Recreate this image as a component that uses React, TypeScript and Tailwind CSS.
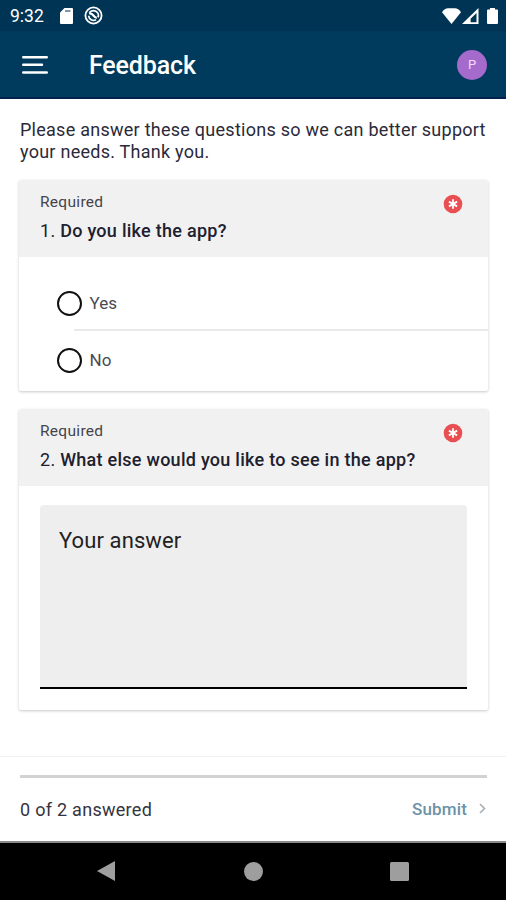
import type { ReactNode } from 'react';

function StatusBar() {
  return (
    <div className="flex h-[31px] items-center justify-between bg-[#003455] pl-[10px] pr-[8px] text-white">
      <div className="flex h-full items-center">
        <span className="w-[50px] pt-[1px] text-[17.5px] leading-[30px]">9:32</span>
        <svg className="h-4 w-[13px]" viewBox="0 0 13 16" fill="currentColor">
          <path d="M4.5 0H12a1 1 0 0 1 1 1v14a1 1 0 0 1-1 1H1a1 1 0 0 1-1-1V4.5z" />
          <path d="M5 3h5.5" stroke="#5d7f98" strokeWidth="1.6" />
        </svg>
        <svg className="ml-[11px] h-[19px] w-[19px]" viewBox="0 0 19 19" fill="none" stroke="currentColor">
          <circle cx="9.5" cy="9.5" r="8.1" strokeWidth="1.8" />
          <path d="M5.4 6.8a4.9 4.9 0 0 1 8.6 4.6M12 13.7a4.9 4.9 0 0 1-7.3-3.9" strokeWidth="1.8" />
          <path d="M5.2 7.8c2-.8 3 .2 4.200 1.700s2 2.300 3.400 2.300" strokeWidth="2.2" />
        </svg>
      </div>
      <div className="flex items-center">
        <svg className="h-4 w-[19px]" viewBox="0 0 19 16" fill="currentColor">
          <path d="M0 4.200C1.500 1.500 4 .2 6 .2h7c2 0 4.500 1.300 6 4L9.500 16z" />
        </svg>
        <svg className="ml-[1px] h-4 w-[17px]" viewBox="0 0 17 16" fill="currentColor">
          <path fillRule="evenodd" d="M0 16L16.500 0v16zM8.600 14.200h5.900V5L8.600 10.800z" />
        </svg>
        <svg className="ml-[8px] h-4 w-[11px]" viewBox="0 0 11 16" fill="currentColor">
          <path d="M3 0h5v1.400h2a1 1 0 0 1 1 1V15a1 1 0 0 1-1 1H1a1 1 0 0 1-1-1V2.400a1 1 0 0 1 1-1h2z" />
        </svg>
      </div>
    </div>
  );
}

function AppBar() {
  return (
    <header className="flex h-[68px] items-center border-b-2 border-[#00204f] bg-[#003a5d] pl-[22px] pr-[19px]">
      <button aria-label="Menu" className="pt-[2px]">
        <svg className="h-5 w-[26px]" viewBox="0 0 26 20" fill="none" stroke="white" strokeWidth="2.4" strokeLinecap="round">
          <path d="M1.200 2.200h23.600M1.200 9.800h18.800M1.200 17.500h23.600" />
        </svg>
      </button>
      <h1 className="ml-[41px] flex-1 pt-[4px] text-[25px] font-medium tracking-[-0.15px] text-white">Feedback</h1>
      <div className="mt-[2px] flex h-[30px] w-[30px] items-center justify-center rounded-full bg-[#a46bcc] text-[13px] text-[#f0dcfa]">P</div>
    </header>
  );
}

interface QuestionProps {
  num: number;
  title: string;
  className: string;
  children: ReactNode;
}

function QuestionCard({ num, title, className, children }: QuestionProps) {
  return (
    <section className={`ml-[19px] mr-[18px] rounded-[2px] bg-white shadow-[0_1px_3px_rgba(0,0,0,0.22)] ${className}`}>
      <div className="flex h-[77px] justify-between rounded-t-[2px] bg-[#f1f1f1] pl-[21px] pr-[25px] pt-[11px]">
        <div>
          <p className="text-[15.5px] leading-[22px] tracking-[0.3px] text-[#44444c]">Required</p>
          <h2 className="mt-[7px] text-[18px] leading-[22px] font-medium tracking-[0.27px] text-[#20202e]">
            <span className="font-normal">{num}.</span> {title}
          </h2>
        </div>
        <svg className="mt-[3px] h-5 w-5" viewBox="0 0 20 20">
          <circle cx="10" cy="10" r="9.3" fill="#e94f52" />
          <path d="M10 5.300v9.400M5.900 7.600l8.200 4.800M14.100 7.600l-8.200 4.800" stroke="white" strokeWidth="1.8" />
        </svg>
      </div>
      {children}
    </section>
  );
}

function Option({ label }: { label: string }) {
  return (
    <label className="flex h-[26px] items-center gap-[8px] pl-[37.5px]">
      <span className="h-[25px] w-[25px] rounded-full border-[2.5px] border-[#111]" />
      <span className="pt-[1px] text-[17px] leading-[25px] text-[#4a4a52]">{label}</span>
    </label>
  );
}

function NavBar() {
  return (
    <nav className="flex h-[59px] items-center justify-between border-t-2 border-[#8a8a8a] bg-black px-[97px] pb-[1px]">
      <svg className="h-5 w-[18px]" viewBox="0 0 18 20" fill="#9e9e9e">
        <path d="M0 10L18 0v20z" />
      </svg>
      <div className="ml-[1px] h-[19px] w-[19px] rounded-full bg-[#9e9e9e]" />
      <div className="h-[19px] w-[19px] rounded-[1.5px] bg-[#9e9e9e]" />
    </nav>
  );
}

export default function App() {
  return (
    <div className="flex h-[900px] w-[506px] flex-col overflow-hidden bg-white font-['Roboto',sans-serif]">
      <StatusBar />
      <AppBar />
      <main className="flex-1">
        <p className="mt-[20px] pl-[20px] text-[18px] leading-[22px] tracking-[0.26px] whitespace-nowrap text-[#2a2a3a]">
          Please answer these questions so we can better support
          <br />
          your needs. Thank you.
        </p>
        <QuestionCard num={1} title="Do you like the app?" className="mt-[17px] h-[211px]">
          <div className="pt-[33px]">
            <Option label="Yes" />
            <div className="mt-[13px] mb-[16px] ml-[55px] h-[2px] bg-[#e9e9e9]" />
            <Option label="No" />
          </div>
        </QuestionCard>
        <QuestionCard num={2} title="What else would you like to see in the app?" className="mt-[18px] h-[301px]">
          <div className="ml-[21px] mr-[21px] mt-[19px] h-[184px] rounded-t-[4px] border-b-2 border-black bg-[#eeeeee] px-[19px] pt-[22px] text-[22px] leading-[28px] tracking-[0.1px] text-[#222]">
            Your answer
          </div>
        </QuestionCard>
      </main>
      <footer className="h-[85px] border-t border-[#f0f0f0] pl-[20px] pr-[19px] pt-[18px]">
        <div className="h-[3px] bg-[#d2d2d2]" />
        <div className="mt-[19px] flex items-center justify-between leading-[24px]">
          <span className="pt-[1px] text-[18px] tracking-[0.28px] text-[#34343f]">0 of 2 answered</span>
          <button className="mt-[-2px] flex items-center text-[17px] font-medium tracking-[0.15px] text-[#6d92a8]">
            Submit
            <svg className="ml-[11px] h-[11px] w-[9px]" viewBox="0 0 9 11" fill="none" stroke="#a9b0b6" strokeWidth="1.7">
              <path d="M2 1l4.500 4.500L2 10" />
            </svg>
          </button>
        </div>
      </footer>
      <NavBar />
    </div>
  );
}
